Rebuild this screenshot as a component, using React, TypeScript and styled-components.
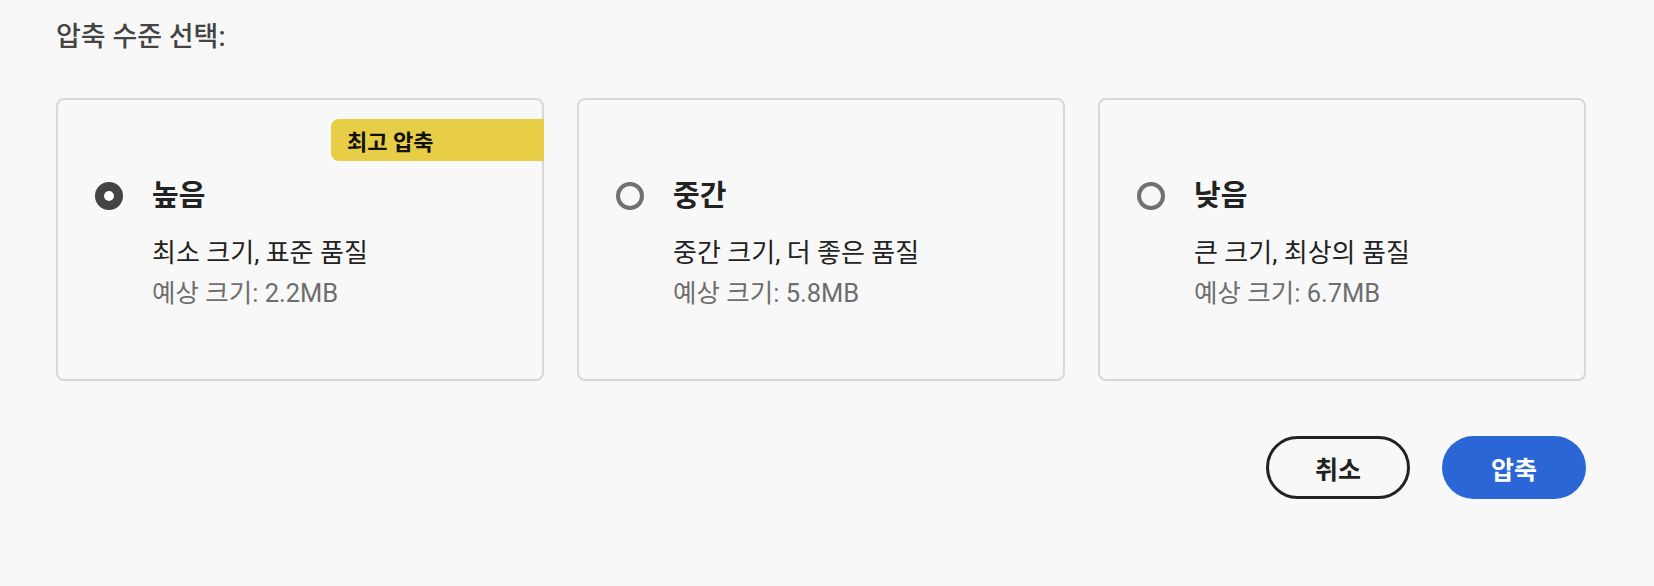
import { FC, useState } from "react";
import styled, { createGlobalStyle } from "styled-components";

const GlobalStyle = createGlobalStyle`
  body {
    margin: 0;
    background-color: #f8f8f8;
    font-family: Roboto, "Noto Sans CJK KR", sans-serif;
  }
`;

const StyledPage = styled.div`
  padding: 21px 68px 40px 56px;
`;

const StyledTitle = styled.h2`
  margin: 0 0 45px;
  font-size: 27px;
  line-height: 32px;
  font-weight: 500;
  color: #444444;
`;

const StyledCardGrid = styled.div`
  display: grid;
  grid-template-columns: repeat(3, 1fr);
  gap: 33px;
`;

const StyledCard = styled.div`
  position: relative;
  box-sizing: border-box;
  height: 283px;
  padding: 78px 37px 0;
  border: 2px solid #d8d8d8;
  border-radius: 8px;
  background-color: #f8f8f8;
  cursor: pointer;
`;

const StyledBadge = styled.span`
  position: absolute;
  top: 19px;
  right: -2px;
  width: 213px;
  height: 42px;
  box-sizing: border-box;
  padding-left: 16px;
  display: flex;
  align-items: center;
  background-color: #e8cd46;
  border-radius: 8px 0 0 8px;
  font-size: 22px;
  font-weight: 700;
  color: #111111;
`;

const StyledOptionRow = styled.div`
  display: flex;
  align-items: flex-start;
  gap: 29px;
`;

const StyledRadioBox = styled.div`
  height: 36px;
  display: flex;
  align-items: center;
`;

const StyledRadio = styled.span<{ checked: boolean }>`
  box-sizing: border-box;
  width: 28px;
  height: 28px;
  border-radius: 50%;
  border: ${(props) =>
    props.checked ? "9.5px solid #444444" : "4px solid #717171"};
  background-color: ${(props) => (props.checked ? "#ffffff" : "transparent")};
`;

const StyledTextColumn = styled.div`
  display: flex;
  flex-direction: column;
`;

const StyledOptionName = styled.span`
  font-size: 29px;
  line-height: 36px;
  font-weight: 700;
  color: #222222;
`;

const StyledDescription = styled.span`
  margin-top: 23px;
  font-size: 26px;
  line-height: 32px;
  color: #222222;
`;

const StyledEstimate = styled.span`
  margin-top: 9px;
  font-size: 25.5px;
  line-height: 30px;
  color: #6e6e6e;
`;

const StyledActions = styled.div`
  display: flex;
  justify-content: flex-end;
  gap: 32px;
  margin-top: 55px;
`;

const StyledButton = styled.button<{ primary?: boolean }>`
  box-sizing: border-box;
  width: 144px;
  height: 63px;
  border-radius: 32px;
  border: ${(props) => (props.primary ? "none" : "3px solid #222222")};
  background-color: ${(props) => (props.primary ? "#2b66d6" : "transparent")};
  color: ${(props) => (props.primary ? "#ffffff" : "#222222")};
  font-family: inherit;
  font-size: 25px;
  font-weight: 700;
  cursor: pointer;
`;

type Level = {
  id: string;
  name: string;
  description: string;
  size: string;
  badge?: string;
};

const levels: Level[] = [
  {
    id: "high",
    name: "높음",
    description: "최소 크기, 표준 품질",
    size: "2.2MB",
    badge: "최고 압축",
  },
  {
    id: "medium",
    name: "중간",
    description: "중간 크기, 더 좋은 품질",
    size: "5.8MB",
  },
  {
    id: "low",
    name: "낮음",
    description: "큰 크기, 최상의 품질",
    size: "6.7MB",
  },
];

const App: FC = () => {
  const [selected, setSelected] = useState("high");

  return (
    <>
      <GlobalStyle />
      <StyledPage>
        <StyledTitle>압축 수준 선택:</StyledTitle>
        <StyledCardGrid>
          {levels.map((level) => (
            <StyledCard key={level.id} onClick={() => setSelected(level.id)}>
              {level.badge && <StyledBadge>{level.badge}</StyledBadge>}
              <StyledOptionRow>
                <StyledRadioBox>
                  <StyledRadio checked={selected === level.id} />
                </StyledRadioBox>
                <StyledTextColumn>
                  <StyledOptionName>{level.name}</StyledOptionName>
                  <StyledDescription>{level.description}</StyledDescription>
                  <StyledEstimate>예상 크기: {level.size}</StyledEstimate>
                </StyledTextColumn>
              </StyledOptionRow>
            </StyledCard>
          ))}
        </StyledCardGrid>
        <StyledActions>
          <StyledButton>취소</StyledButton>
          <StyledButton primary>압축</StyledButton>
        </StyledActions>
      </StyledPage>
    </>
  );
};

export default App;
